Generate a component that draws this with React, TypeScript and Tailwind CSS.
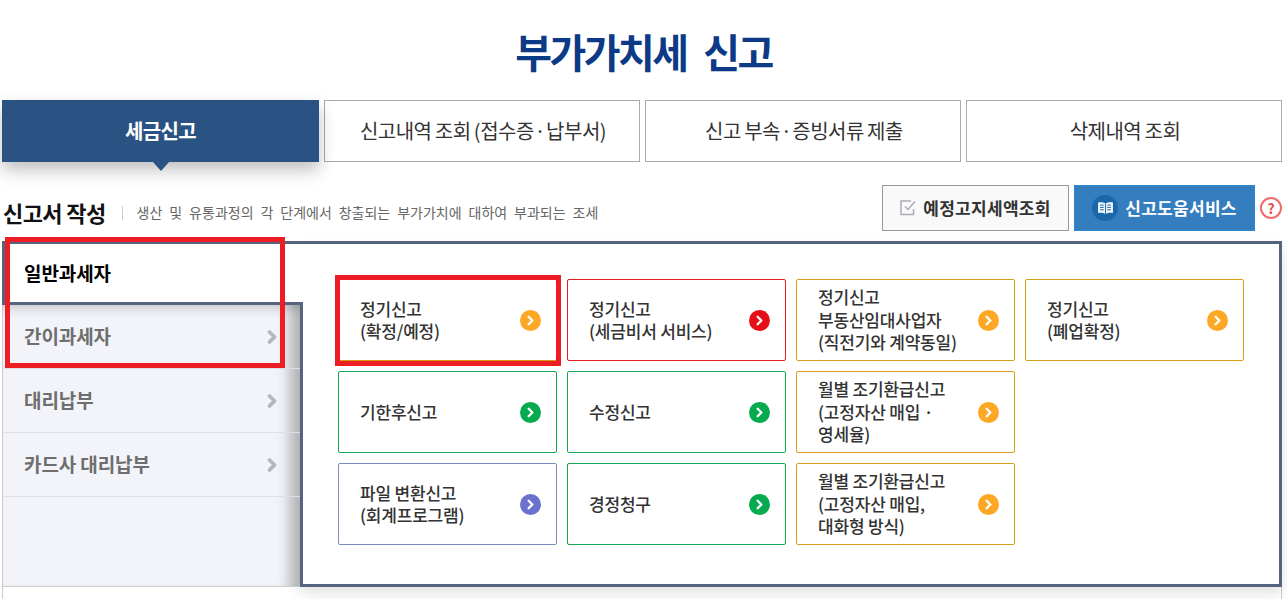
import { ChevronRight } from 'lucide-react';

const tabs = [
    ['신고내역 조회 (접수증', '납부서)'],
    ['신고 부속', '증빙서류 제출'],
    ['삭제내역 조회'],
];

const sideItems = ['간이과세자', '대리납부', '카드사 대리납부'];

const amber = { border: 'border-[#d99c14]', dot: 'bg-[#fca825]' };
const red = { border: 'border-[#e51c23]', dot: 'bg-[#e60f17]' };
const green = { border: 'border-[#0eaa56]', dot: 'bg-[#06ab50]' };
const indigo = { border: 'border-[#7c8bbf]', dot: 'bg-[#6a71cf]' };

const cards = [
    { lines: ['정기신고', '(확정/예정)'], tone: amber },
    { lines: ['정기신고', '(세금비서 서비스)'], tone: red },
    { lines: ['정기신고', '부동산임대사업자', '(직전기와 계약동일)'], tone: amber },
    { lines: ['정기신고', '(폐업확정)'], tone: amber },
    { lines: ['기한후신고'], tone: green },
    { lines: ['수정신고'], tone: green },
    { lines: ['월별 조기환급신고', '(고정자산 매입 ·', '영세율)'], tone: amber },
    null,
    { lines: ['파일 변환신고', '(회계프로그램)'], tone: indigo },
    { lines: ['경정청구'], tone: green },
    { lines: ['월별 조기환급신고', '(고정자산 매입,', '대화형 방식)'], tone: amber },
];

function BookIcon() {
    return (
        <svg width="17" height="15" viewBox="0 0 16 14" fill="none">
            <path d="M8 2.6C6.5 1.4 4 1 1 1.3V11.2C4 10.9 6.5 11.2 8 12.6C9.5 11.2 12 10.9 15 11.2V1.3C12 1 9.5 1.4 8 2.6Z" fill="#f1f6fb" />
            <path d="M8 2.6V12.6M2.8 3.8H6.4M2.8 6H6.4M2.8 8.2H6.4M9.6 3.8H13.2M9.6 6H13.2M9.6 8.2H13.2" stroke="#1b68a8" strokeWidth="0.9" />
        </svg>
    );
}

function CheckIcon() {
    return (
        <svg width="16" height="16" viewBox="0 0 16 16" fill="none">
            <path d="M13.5 9V14.5H1V1H11" stroke="#a9adb4" strokeWidth="1.5" />
            <path d="M5 6.5L8 9.5L15 1.5" stroke="#a9adb4" strokeWidth="1.5" />
        </svg>
    );
}

export default function App() {
    return (
        <div className="h-[599px] overflow-hidden bg-white font-['Noto_Sans_CJK_KR','Noto_Sans',sans-serif] text-[#333]">
            <h1 className="pt-[23px] text-center text-[40px] leading-[56px] font-bold tracking-[-2.5px] text-[#0d3a86] [word-spacing:10px]">
                부가가치세 신고
            </h1>

            <div className="relative mx-[2px] mt-[21px] w-[1280px]">
                <div className="flex gap-[5px]">
                    <div className="relative flex h-[62px] w-[317px] items-center justify-center bg-[#2a5283] text-[20px] font-bold tracking-[-0.6px] text-white shadow-[0_8px_16px_rgba(0,0,0,0.25)]">
                        세금신고
                        <span className="absolute top-full left-1/2 -ml-2 border-x-8 border-t-[9px] border-x-transparent border-t-[#2a5283]" />
                    </div>
                    {tabs.map((parts) => (
                        <div key={parts[0]} className="flex h-[62px] w-[316px] items-center justify-center border border-[#aaa] pl-[2px] text-[20px] tracking-[-0.5px] whitespace-pre [word-spacing:-0.7px]">
                            {parts[0]}
                            {parts[1] && (
                                <>
                                    <span className="-mx-[2.5px]"> · </span>
                                    {parts[1]}
                                </>
                            )}
                        </div>
                    ))}
                </div>

                <div className="mt-[23px] flex h-[46px] items-center">
                    <h2 className="mt-[9px] ml-px text-[22px] font-bold tracking-[-0.6px] text-[#111]">신고서 작성</h2>
                    <span className="mt-[9px] mr-[14px] ml-[16px] h-[14px] w-px bg-[#ccc]" />
                    <p className="mt-[9px] text-[14px] text-[#666] [word-spacing:3.8px]">생산 및 유통과정의 각 단계에서 창출되는 부가가치에 대하여 부과되는 조세</p>
                    <button className="ml-auto flex h-[46px] w-[187px] items-center justify-center gap-[7px] border border-[#999] bg-[#f9f9f9] text-[17px] font-bold tracking-[0.3px] text-[#333]">
                        <CheckIcon />
                        예정고지세액조회
                    </button>
                    <button className="ml-[5px] flex h-[46px] w-[181px] items-center justify-center gap-[7px] border border-[#2d86cf] bg-[#347dbf] text-[17px] font-bold tracking-[0.3px] text-white">
                        <span className="flex h-[26px] w-[26px] items-center justify-center rounded-full bg-[#1b68a8]">
                            <BookIcon />
                        </span>
                        신고도움서비스
                    </button>
                    <span className="ml-[5px] flex h-[22px] w-[22px] items-center justify-center rounded-full border-2 border-[#ef6a6a] text-[14px] font-bold text-[#e84c4c]">?</span>
                </div>

                <div className="mt-[10px] flex h-[346px] border-t-[3px] border-t-[#56647f]">
                    <div className="z-10 flex w-[298px] flex-col border-b border-[#ccc]">
                        <div className="-mr-[3px] flex h-[61px] shrink-0 items-center border-b-[3px] border-l-[3px] border-[#56647f] bg-white pl-[19px] text-[19px] font-bold tracking-[-0.1px] text-black">
                            일반과세자
                        </div>
                        <div className="flex flex-1 flex-col border-l border-[#ccc] bg-[#f2f4f9] shadow-[inset_-20px_0_14px_-10px_rgba(0,0,0,0.28),inset_0_14px_12px_-10px_rgba(0,0,0,0.16)]">
                            {sideItems.map((s) => (
                                <div key={s} className="flex h-[64px] items-center justify-between border-b border-[#dfe1e6] pr-[18px] pl-[21px] text-[19px] font-bold tracking-[-0.1px] text-[#6e6e6e]">
                                    {s}
                                    <ChevronRight size={20} strokeWidth={4.5} className="text-[#b1b6c3]" />
                                </div>
                            ))}
                        </div>
                    </div>
                    <div className="flex-1 border-r-[3px] border-b-[3px] border-l-[3px] border-[#56647f] pt-[35px] pl-[35px] shadow-[0_6px_14px_rgba(0,0,0,0.12)]">
                        <div className="grid grid-cols-[repeat(4,219px)] grid-rows-[repeat(3,82px)] gap-[10px]">
                            {cards.map((c, i) =>
                                c ? (
                                    <div key={i} className={`flex items-center justify-between rounded-[2px] border pr-[15px] pl-[21px] text-[17px] leading-[22.5px] font-medium tracking-[-0.2px] text-[#333] ${c.tone.border}`}>
                                        <div>
                                            {c.lines.map((l) => (
                                                <div key={l}>{l}</div>
                                            ))}
                                        </div>
                                        <span className={`flex h-[21px] w-[21px] shrink-0 items-center justify-center rounded-full text-white ${c.tone.dot}`}>
                                            <ChevronRight size={15} strokeWidth={3.8} />
                                        </span>
                                    </div>
                                ) : (
                                    <div key={i} />
                                ),
                            )}
                        </div>
                    </div>
                </div>
                <div className="h-[20px] border-x border-[#ccc]" />

                {/* red marks from the screenshot */}
                <div className="absolute top-[137px] left-[3px] z-20 h-[131px] w-[280px] border-[5px] border-[#ee1c25]" />
                <div className="absolute top-[175px] left-[333px] z-20 h-[91px] w-[226px] border-[5px] border-[#ee1c25]" />
            </div>
        </div>
    );
}
